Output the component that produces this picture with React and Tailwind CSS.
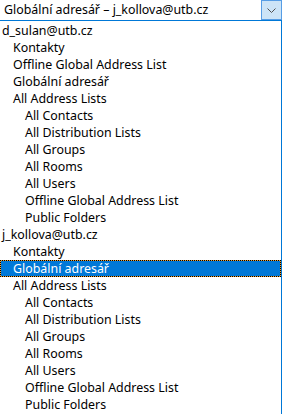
import React from "react";

const rows = [
  [0, "d_sulan@utb.cz"],
  [1, "Kontakty"],
  [1, "Offline Global Address List"],
  [1, "Globální adresář"],
  [1, "All Address Lists"],
  [2, "All Contacts"],
  [2, "All Distribution Lists"],
  [2, "All Groups"],
  [2, "All Rooms"],
  [2, "All Users"],
  [2, "Offline Global Address List"],
  [2, "Public Folders"],
  [0, "j_kollova@utb.cz"],
  [1, "Kontakty"],
  [1, "Globální adresář", true],
  [1, "All Address Lists"],
  [2, "All Contacts"],
  [2, "All Distribution Lists"],
  [2, "All Groups"],
  [2, "All Rooms"],
  [2, "All Users"],
  [2, "Offline Global Address List"],
  [2, "Public Folders"],
];

const pad = ["pl-[2px]", "pl-[13px]", "pl-[25px]"];

export default function App() {
  return (
    <div
      className="w-[283px] h-[414px] bg-white overflow-hidden text-[12.4px] text-black"
      style={{ fontFamily: '"Noto Sans", "Open Sans", sans-serif' }}
    >
      <div className="w-[282px]">
        <div className="flex h-[21px] border-b border-[#0078d7]">
          <div className="flex-1 pl-[4px] leading-[20px] whitespace-nowrap">
            Globální adresář – j_kollova@utb.cz
          </div>
          <div className="w-[21px] h-[20px] bg-[#cce4f7] border border-[#569de5] flex items-center justify-center">
            <svg width="9" height="5" viewBox="0 0 9 5" fill="none">
              <path d="M0.5 0.5 L4.5 4.5 L8.5 0.5" stroke="#505050" strokeWidth="1" />
            </svg>
          </div>
        </div>
        <div className="border-r border-[#0078d7] h-[393px] pt-[1px]">
          {rows.map(([lvl, text, sel], i) =>
            sel ? (
              <div
                key={i}
                className="h-[17px] border border-dotted border-black bg-[#f0a030]"
              >
                <div
                  className={`h-full bg-[#0078d7] text-white leading-[15px] whitespace-nowrap ${
                    lvl === 1 ? "pl-[12px]" : lvl === 2 ? "pl-[24px]" : "pl-[1px]"
                  }`}
                >
                  {text}
                </div>
              </div>
            ) : (
              <div
                key={i}
                className={`h-[17px] leading-[17px] whitespace-nowrap ${pad[lvl]}`}
              >
                {text}
              </div>
            )
          )}
        </div>
      </div>
    </div>
  );
}
